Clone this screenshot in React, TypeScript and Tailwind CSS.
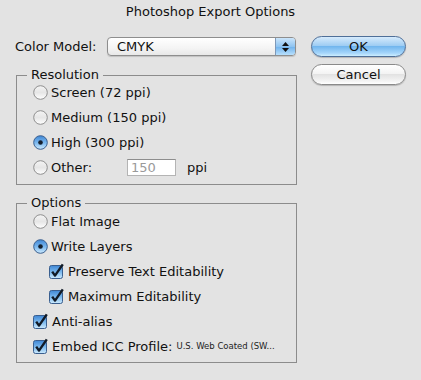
import React from "react";

function Radio({ checked }: { checked?: boolean }) {
  const id = checked ? "rOn" : "rOff";
  return (
    <svg width="15" height="15" viewBox="0 0 15 15" className="shrink-0">
      <defs>
        <linearGradient id={id} x1="0" y1="0" x2="0" y2="1">
          {checked ? (
            <>
              <stop offset="0" stopColor="#3f86d4" />
              <stop offset="0.5" stopColor="#78b6ee" />
              <stop offset="1" stopColor="#cdeafd" />
            </>
          ) : (
            <>
              <stop offset="0" stopColor="#f4f4f4" />
              <stop offset="0.5" stopColor="#e6e6e6" />
              <stop offset="1" stopColor="#ffffff" />
            </>
          )}
        </linearGradient>
      </defs>
      <circle cx="7.5" cy="7.5" r="6.8" fill={`url(#${id})`} stroke={checked ? "#3a5f8f" : "#8e8e8e"} strokeWidth="1" />
      {checked && <circle cx="7.5" cy="7.5" r="2.3" fill="#15202e" />}
    </svg>
  );
}

function Check() {
  return (
    <svg width="16" height="16" viewBox="0 0 16 16" className="shrink-0 -mt-[2px]">
      <defs>
        <linearGradient id="cb" x1="0" y1="0" x2="0" y2="1">
          <stop offset="0" stopColor="#3f86d4" />
          <stop offset="0.5" stopColor="#7ab8ee" />
          <stop offset="1" stopColor="#cdeafd" />
        </linearGradient>
      </defs>
      <rect x="0.5" y="2.5" width="13" height="13" rx="2" fill="url(#cb)" stroke="#3a5f8f" />
      <path d="M3.2 8.6 L6 12.6 L13.8 1.4" fill="none" stroke="#111a26" strokeWidth="2.4" strokeLinejoin="round" />
    </svg>
  );
}

function Group({ title, className, children }: { title: string; className: string; children: React.ReactNode }) {
  return (
    <div className={`relative border border-[#8c8c8c] ${className}`}>
      <span className="absolute -top-[9px] left-[10px] bg-[#e3e3e3] px-[4px] leading-[16px]">{title}</span>
      {children}
    </div>
  );
}

function Row({ indent, children }: { indent?: boolean; children: React.ReactNode }) {
  return <div className={`flex items-center h-[25px] gap-[3px] whitespace-nowrap ${indent ? "pl-[32px]" : "pl-[16px]"}`}>{children}</div>;
}

export default function App() {
  return (
    <div className="w-[421px] h-[380px] bg-[#e3e3e3] font-['DejaVu_Sans',sans-serif] text-[13px] text-[#111]">
      <div className="h-[23px] flex items-center justify-center">Photoshop Export Options</div>
      <div className="flex pt-[14px]">
        <div className="w-[297px] pl-[15px]">
          <div className="flex items-center h-[19px]">
            <span className="w-[92px]">Color Model:</span>
            <div className="w-[189px] h-[19px] flex rounded-[4px] border border-[#8e8e8e] bg-[linear-gradient(to_bottom,#ffffff,#f4f4f4_60%,#e8e8e8)] shadow-[0_1px_1px_rgba(0,0,0,0.15)] overflow-hidden">
              <span className="flex-1 pl-[9px] leading-[17px]">CMYK</span>
              <div className="w-[20px] h-full border-l border-[#7d98b8] bg-[linear-gradient(to_bottom,#cbe5fb,#8fc4f1_50%,#6eb1ec_51%,#b8e0fd)] flex flex-col items-center justify-center gap-[2px]">
                <svg width="7" height="4" viewBox="0 0 7 4"><path d="M3.5 0 L7 4 L0 4 Z" fill="#111" /></svg>
                <svg width="7" height="4" viewBox="0 0 7 4"><path d="M0 0 L7 0 L3.5 4 Z" fill="#111" /></svg>
              </div>
            </div>
          </div>

          <Group title="Resolution" className="mt-[19px] ml-[1px] w-[281px] h-[110px] pt-[4px]">
            <Row><Radio /><span>Screen (72 ppi)</span></Row>
            <Row><Radio /><span>Medium (150 ppi)</span></Row>
            <Row><Radio checked /><span>High (300 ppi)</span></Row>
            <Row>
              <Radio />
              <span className="w-[73px]">Other:</span>
              <div className="w-[49px] h-[17px] bg-white border border-[#b4b4b4] border-t-[#8e8e8e] pl-[3px] leading-[15px] text-[#9a9a9a]">150</div>
              <span className="ml-[8px]">ppi</span>
            </Row>
          </Group>

          <Group title="Options" className="mt-[18px] ml-[1px] w-[281px] h-[160px] pt-[5px]">
            <Row><Radio /><span>Flat Image</span></Row>
            <Row><Radio checked /><span>Write Layers</span></Row>
            <Row indent><Check /><span>Preserve Text Editability</span></Row>
            <Row indent><Check /><span>Maximum Editability</span></Row>
            <Row><Check /><span>Anti-alias</span></Row>
            <Row>
              <Check />
              <span>Embed ICC Profile:</span>
              <span className="ml-[1px] text-[8.5px] text-[#222]">U.S. Web Coated (SW...</span>
            </Row>
          </Group>
        </div>

        <div className="ml-[14px] w-[95px] flex flex-col gap-[7px] -mt-[1px]">
          <button className="h-[21px] rounded-full border border-[#4f6f98] bg-[linear-gradient(to_bottom,#d6ebfc,#9fcdf3_45%,#72b6ee_50%,#a6d6fb_85%,#cdeeff)] shadow-[0_1px_1px_rgba(0,0,0,0.2)] leading-[19px] text-center">OK</button>
          <button className="h-[21px] rounded-full border border-[#8a8a8a] bg-[linear-gradient(to_bottom,#ffffff,#f3f3f3_45%,#e2e2e2_50%,#f4f4f4_85%,#ffffff)] shadow-[0_1px_1px_rgba(0,0,0,0.2)] leading-[19px] text-center">Cancel</button>
        </div>
      </div>
    </div>
  );
}
